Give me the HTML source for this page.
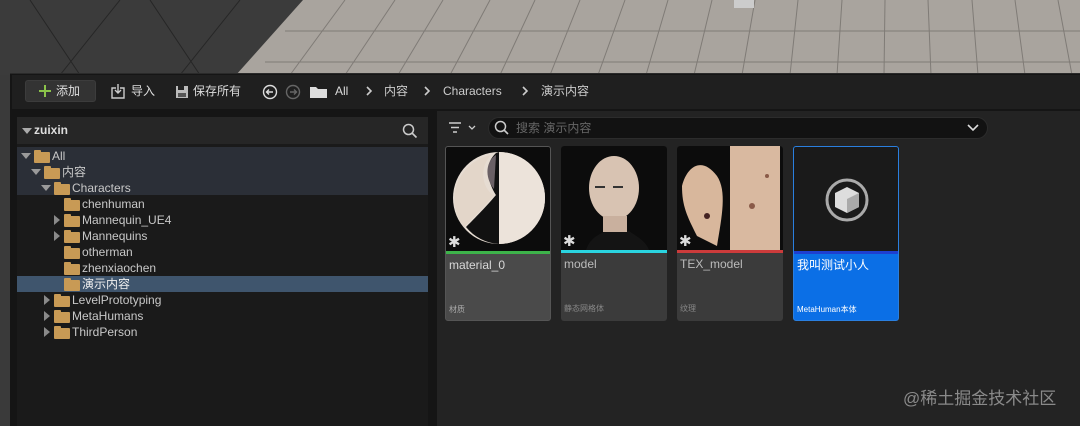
<!DOCTYPE html>
<html><head><meta charset="utf-8"><style>
*{margin:0;padding:0;box-sizing:border-box}
body{width:1080px;height:426px;overflow:hidden;background:#3a3a3a;font-family:"Liberation Sans","Noto Sans CJK SC",sans-serif;position:relative;color:#c8c8c8}
.a{position:absolute}
.t{font-size:12px;white-space:nowrap;line-height:16px;height:16px}
.fold{position:absolute;width:16px;height:11px;background:#c89a55;border-radius:1px}
.fold:before{content:"";position:absolute;left:0;top:-2px;width:7px;height:3px;background:#c89a55;border-radius:1px 1px 0 0}
.arr{position:absolute;width:0;height:0;border-top:5px solid transparent;border-bottom:5px solid transparent;border-left:6px solid #8a8a8a}
.arrd{position:absolute;width:0;height:0;border-left:5px solid transparent;border-right:5px solid transparent;border-top:6px solid #9a9a9a}
.card{position:absolute;top:146px;width:106px;height:175px;border-radius:3px;overflow:hidden;background:#3b3b3b}
.th{position:absolute;left:0;top:0;width:106px;height:104px;background:#0c0c0c}
.bar{position:absolute;left:0;top:104px;width:106px;height:3px}
.nm{position:absolute;left:3px;top:110px;font-size:12px;line-height:16px;color:#d8d8d8}
.ty{position:absolute;left:3px;top:158px;font-size:8px;line-height:10px;color:#aaa}
.star{position:absolute;left:2px;top:89px;color:#ddd;font-size:15px;line-height:14px}
</style></head><body>
<svg class="a" style="left:0;top:0" width="1080" height="75">
<rect width="1080" height="75" fill="#3b3b3b"/>
<polygon points="303,0 1080,0 1080,75 236,75" fill="#a9a49e"/>
<g stroke="#6e6a66" stroke-width="1" opacity=".7">
<line x1="285" y1="31" x2="1080" y2="31"/><line x1="265" y1="62" x2="1080" y2="62"/>
<line x1="345" y1="0" x2="290" y2="75"/><line x1="395" y1="0" x2="345" y2="75"/><line x1="443" y1="0" x2="398" y2="75"/><line x1="490" y1="0" x2="450" y2="75"/><line x1="535" y1="0" x2="500" y2="75"/><line x1="580" y1="0" x2="550" y2="75"/><line x1="625" y1="0" x2="598" y2="75"/><line x1="668" y1="0" x2="646" y2="75"/><line x1="712" y1="0" x2="694" y2="75"/><line x1="755" y1="0" x2="742" y2="75"/><line x1="798" y1="0" x2="790" y2="75"/><line x1="842" y1="0" x2="837" y2="75"/><line x1="885" y1="0" x2="884" y2="75"/><line x1="928" y1="0" x2="931" y2="75"/><line x1="972" y1="0" x2="978" y2="75"/><line x1="1015" y1="0" x2="1025" y2="75"/><line x1="1058" y1="0" x2="1072" y2="75"/>
</g>
<g stroke="#262626" stroke-width="1"><line x1="30" y1="0" x2="80" y2="75"/><line x1="120" y1="0" x2="60" y2="75"/><line x1="150" y1="0" x2="200" y2="75"/><line x1="240" y1="0" x2="180" y2="75"/></g>
<rect x="734" y="0" width="20" height="8" fill="#ccc"/>
</svg>
<div class="a" style="left:0;top:75px;width:12px;height:351px;background:#3a3a3a"></div>
<div class="a" style="left:10px;top:73px;width:1070px;height:353px;background:#151515;border-top:1px solid #2a2a2a"></div>
<div class="a" style="left:12px;top:75px;width:1068px;height:34px;background:#1f1f1f"></div>
<div class="a" style="left:25px;top:80px;width:71px;height:22px;background:#333;border-radius:3px;border:1px solid #3c3c3c"></div>
<svg class="a" style="left:38px;top:84px" width="14" height="14"><path d="M7 1v12M1 7h12" stroke="#8bc34a" stroke-width="2"/></svg>
<div class="a t" style="left:56px;top:83px;color:#ddd">添加</div>
<svg class="a" style="left:110px;top:83px" width="18" height="17"><path d="M6 5H2v10h12V5h-4M8 1v9M5 7l3 3 3-3" stroke="#ccc" fill="none" stroke-width="1.4"/></svg>
<div class="a t" style="left:131px;top:83px;color:#ddd">导入</div>
<svg class="a" style="left:175px;top:85px" width="14" height="14"><rect x="1" y="1" width="12" height="12" fill="#bbb"/><rect x="3" y="1" width="6" height="4" fill="#222"/><rect x="3" y="8" width="8" height="4" fill="#555"/></svg>
<div class="a t" style="left:193px;top:83px;color:#ddd">保存所有</div>
<svg class="a" style="left:262px;top:84px" width="40" height="16"><circle cx="8" cy="8" r="6.5" stroke="#ddd" fill="none" stroke-width="1.4"/><path d="M11 8H5M7 5.5 4.5 8 7 10.5" stroke="#ddd" fill="none" stroke-width="1.4"/><circle cx="31" cy="8" r="6.5" stroke="#666" fill="none" stroke-width="1.4"/><path d="M28 8h6M32 5.5 34.5 8 32 10.5" stroke="#666" fill="none" stroke-width="1.4"/></svg>
<svg class="a" style="left:310px;top:85px" width="18" height="14"><path d="M0 2h6l2 2h9v9H0z" fill="#ddd"/></svg>
<div class="a t" style="left:335px;top:83px;color:#ddd">All</div>
<svg class="a" style="left:365px;top:86px" width="8" height="10"><path d="M2 1l4 4-4 4" stroke="#ccc" fill="none" stroke-width="1.6"/></svg>
<div class="a t" style="left:384px;top:83px;color:#ccc">内容</div>
<svg class="a" style="left:423px;top:86px" width="8" height="10"><path d="M2 1l4 4-4 4" stroke="#ccc" fill="none" stroke-width="1.6"/></svg>
<div class="a t" style="left:443px;top:83px;color:#ccc">Characters</div>
<svg class="a" style="left:521px;top:86px" width="8" height="10"><path d="M2 1l4 4-4 4" stroke="#ccc" fill="none" stroke-width="1.6"/></svg>
<div class="a t" style="left:541px;top:83px;color:#ccc">演示内容</div>
<div class="a" style="left:17px;top:117px;width:411px;height:309px;background:#1a1a1a"></div>
<div class="a" style="left:17px;top:117px;width:411px;height:27px;background:#262626"></div>
<div class="arrd" style="left:22px;top:128px;border-top-color:#aaa"></div>
<div class="a t" style="left:34px;top:122px;color:#ddd;font-weight:bold">zuixin</div>
<svg class="a" style="left:402px;top:123px" width="16" height="16"><circle cx="6.5" cy="6.5" r="5" stroke="#ccc" fill="none" stroke-width="1.5"/><path d="M10 10l4.5 4.5" stroke="#ccc" stroke-width="1.6"/></svg>
<div class="a" style="left:17px;top:147px;width:411px;height:48px;background:#2b2f37"></div>
<div class="a" style="left:17px;top:276px;width:411px;height:16px;background:#3f556d"></div>
<div class="arrd" style="left:21px;top:153px"></div><div class="fold" style="left:34px;top:152px"></div><div class="a t" style="left:52px;top:148px">All</div>
<div class="arrd" style="left:31px;top:169px"></div><div class="fold" style="left:44px;top:168px"></div><div class="a t" style="left:62px;top:164px">内容</div>
<div class="arrd" style="left:41px;top:185px"></div><div class="fold" style="left:54px;top:184px"></div><div class="a t" style="left:72px;top:180px">Characters</div>
<div class="fold" style="left:64px;top:200px"></div><div class="a t" style="left:82px;top:196px">chenhuman</div>
<div class="arr" style="left:54px;top:215px"></div><div class="fold" style="left:64px;top:216px"></div><div class="a t" style="left:82px;top:212px">Mannequin_UE4</div>
<div class="arr" style="left:54px;top:231px"></div><div class="fold" style="left:64px;top:232px"></div><div class="a t" style="left:82px;top:228px">Mannequins</div>
<div class="fold" style="left:64px;top:248px"></div><div class="a t" style="left:82px;top:244px">otherman</div>
<div class="fold" style="left:64px;top:264px"></div><div class="a t" style="left:82px;top:260px">zhenxiaochen</div>
<div class="fold" style="left:64px;top:280px"></div><div class="a t" style="left:82px;top:276px;color:#eee">演示内容</div>
<div class="arr" style="left:44px;top:295px"></div><div class="fold" style="left:54px;top:296px"></div><div class="a t" style="left:72px;top:292px">LevelPrototyping</div>
<div class="arr" style="left:44px;top:311px"></div><div class="fold" style="left:54px;top:312px"></div><div class="a t" style="left:72px;top:308px">MetaHumans</div>
<div class="arr" style="left:44px;top:327px"></div><div class="fold" style="left:54px;top:328px"></div><div class="a t" style="left:72px;top:324px">ThirdPerson</div>
<div class="a" style="left:437px;top:111px;width:643px;height:315px;background:#232323"></div>
<svg class="a" style="left:447px;top:120px" width="34" height="16"><path d="M2 3h12M4 7.5h8M6 12h4" stroke="#ccc" stroke-width="1.6"/><path d="M22 6l3 3 3-3" stroke="#ccc" fill="none" stroke-width="1.3"/></svg>
<div class="a" style="left:488px;top:117px;width:500px;height:22px;background:#121212;border-radius:11px;border:1px solid #2c2c2c"></div>
<svg class="a" style="left:494px;top:120px" width="16" height="16"><circle cx="6.5" cy="6.5" r="5" stroke="#ccc" fill="none" stroke-width="1.5"/><path d="M10 10l4 4" stroke="#ccc" stroke-width="1.6"/></svg>
<div class="a t" style="left:516px;top:120px;color:#666">搜索 演示内容</div>
<svg class="a" style="left:967px;top:123px" width="12" height="10"><path d="M1 2l5 5 5-5" stroke="#ddd" fill="none" stroke-width="1.6"/></svg>
<div class="card" style="left:445px;background:#4a4a4a;border:1px solid #555">
<div class="th"><svg width="106" height="104"><circle cx="53" cy="51" r="46" fill="#e6dcd2"/><path d="M50 6 C35 20 45 40 50 48 C40 60 25 75 20 80 A46 46 0 0 0 53 97 V5Z" fill="#111"/><path d="M50 8 C40 14 38 30 48 42 Z" fill="#6a6065"/><path d="M10 40 A46 46 0 0 1 45 8 C30 25 40 45 48 48 C38 60 28 70 18 80 A46 46 0 0 1 10 40Z" fill="#e3d6c9"/><path d="M53 5 A46 46 0 0 1 53 97Z" fill="#ece3da"/></svg></div>
<div class="star">✱</div><div class="bar" style="background:#3db34a"></div><div class="nm">material_0</div><div class="ty">材质</div></div>
<div class="card" style="left:561px">
<div class="th"><svg width="106" height="104"><path d="M25 104 C30 90 40 88 45 85 L68 85 C75 90 85 95 88 104Z" fill="#141414"/><ellipse cx="53" cy="42" rx="25" ry="32" fill="#d8c3b2"/><path d="M42 70 h24 v16 h-24z" fill="#c9b09e"/><rect x="34" y="40" width="10" height="2" fill="#333"/><rect x="52" y="40" width="10" height="2" fill="#333"/></svg></div>
<div class="star">✱</div><div class="bar" style="background:#2ad4e0"></div><div class="nm" style="color:#bbb">model</div><div class="ty" style="color:#888">静态网格体</div></div>
<div class="card" style="left:677px">
<div class="th"><svg width="106" height="104"><rect x="53" y="0" width="50" height="104" fill="#d9b9a0"/><path d="M5 40 C10 20 25 10 40 30 C50 45 45 70 40 100 L20 90 C10 70 5 60 5 40Z" fill="#d8b79c"/><circle cx="30" cy="70" r="3" fill="#422"/><circle cx="75" cy="60" r="3" fill="#8a5a48"/><circle cx="90" cy="30" r="2" fill="#8a5a48"/></svg></div>
<div class="star">✱</div><div class="bar" style="background:#cc3b3b"></div><div class="nm" style="color:#bbb">TEX_model</div><div class="ty" style="color:#888">纹理</div></div>
<div class="card" style="left:793px;background:#0b6fe6;border:1px solid #2a7fdf">
<div class="th" style="background:#1a1a1a"><svg width="106" height="104"><circle cx="53" cy="53" r="20" fill="none" stroke="#aaa" stroke-width="3"/><path d="M53 40 L65 46 L65 60 L53 66 L41 60 L41 46Z" fill="#ddd"/><path d="M53 52 L65 46 L65 60 L53 66Z" fill="#aaa"/></svg></div>
<div class="bar" style="background:#1e3fd0"></div><div class="nm" style="color:#fff">我叫测试小人</div><div class="ty" style="color:#fff">MetaHuman本体</div></div>
<div class="a" style="left:903px;top:388px;font-size:17px;line-height:22px;color:#8a8a8a;white-space:nowrap">@稀土掘金技术社区</div>
</body></html>
